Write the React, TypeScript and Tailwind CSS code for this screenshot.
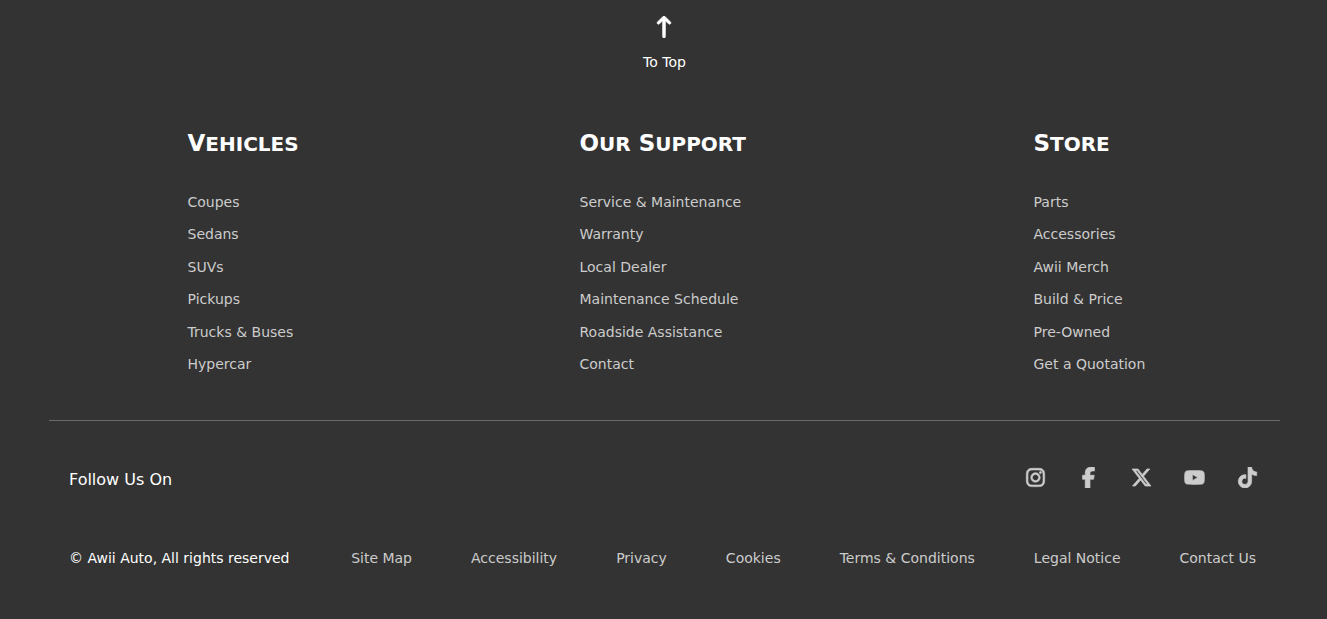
import { FaArrowUpLong, FaFacebookF, FaInstagram, FaTiktok, FaXTwitter, FaYoutube } from 'react-icons/fa6'

const COLUMNS = [
  {
    title: 'Vehicles',
    width: 'w-[115px]',
    links: ['Coupes', 'Sedans', 'SUVs', 'Pickups', 'Trucks & Buses', 'Hypercar'],
  },
  {
    title: 'Our Support',
    width: 'w-[177px]',
    links: ['Service & Maintenance', 'Warranty', 'Local Dealer', 'Maintenance Schedule', 'Roadside Assistance', 'Contact'],
  },
  {
    title: 'Store',
    width: 'w-[108px]',
    links: ['Parts', 'Accessories', 'Awii Merch', 'Build & Price', 'Pre-Owned', 'Get a Quotation'],
  },
]

const SOCIALS = [
  { name: 'Instagram', Icon: FaInstagram },
  { name: 'Facebook', Icon: FaFacebookF },
  { name: 'X', Icon: FaXTwitter },
  { name: 'YouTube', Icon: FaYoutube },
  { name: 'TikTok', Icon: FaTiktok },
]

const LEGAL = ['Site Map', 'Accessibility', 'Privacy', 'Cookies', 'Terms & Conditions', 'Legal Notice', 'Contact Us']

// Wide capitals, the first letter of each word a little taller
function Heading({ text }: { text: string }) {
  return (
    <h2 className="flex h-7 items-baseline gap-2 text-[20px] leading-7 font-bold">
      {text.split(' ').map(word => (
        <span key={word} className="block uppercase first-letter:text-[23px]">{word}</span>
      ))}
    </h2>
  )
}

export default function App() {
  return (
    <footer className="min-h-screen bg-[#333333] pt-4 pr-[47px] pb-8 pl-[49px] font-['DejaVu_Sans',Verdana,sans-serif] text-[14px] text-white">
      <a href="#top" className="mx-auto flex w-fit flex-col items-center gap-3.5 leading-5">
        <FaArrowUpLong size={22} className="stroke-[16]" />
        To Top
      </a>

      <div className="flex justify-around pt-[57px]">
        {COLUMNS.map(col => (
          <nav key={col.title} aria-label={col.title} className={`${col.width} whitespace-nowrap`}>
            <Heading text={col.title} />
            <ul className="mt-[35px] flex h-[182px] flex-col justify-between leading-5 text-[#cccccc]">
              {col.links.map(link => (
                <li key={link}>
                  <a href="#" className="hover:text-white">{link}</a>
                </li>
              ))}
            </ul>
          </nav>
        ))}
      </div>

      <hr className="mt-[46px] border-[#6b6b6b]" />

      <div className="flex items-end justify-between pt-[46px] pr-1.5 pl-5">
        <h3 className="text-[16px] leading-6">Follow Us On</h3>
        <ul className="flex pb-1 text-[#cccccc]">
          {SOCIALS.map(({ name, Icon }) => (
            <li key={name} className="flex w-[53px] justify-center">
              <a href="#" aria-label={name} className="hover:text-white">
                <Icon className="h-[21px] w-auto stroke-[16]" />
              </a>
            </li>
          ))}
        </ul>
      </div>

      <div className="flex items-center justify-between pt-14 pr-6 pl-5 leading-5 whitespace-nowrap">
        <p>© Awii Auto, All rights reserved</p>
        <ul className="flex gap-[59px] text-[#cccccc]">
          {LEGAL.map(link => (
            <li key={link}>
              <a href="#" className="hover:text-white">{link}</a>
            </li>
          ))}
        </ul>
      </div>
    </footer>
  )
}
